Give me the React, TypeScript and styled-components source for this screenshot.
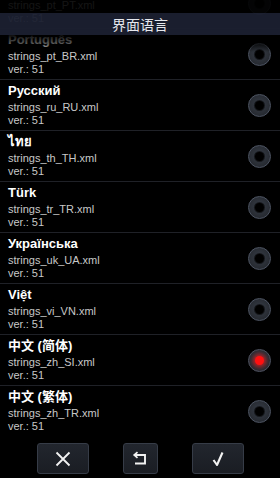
import React from "react"
import styled, { createGlobalStyle } from "styled-components"

interface Lang {
  name: string
  file: string
  version: number
  selected?: boolean
}

const langs: Lang[] = [
  { name: "Português (PT)", file: "strings_pt_PT.xml", version: 51 },
  { name: "Português", file: "strings_pt_BR.xml", version: 51 },
  { name: "Русский", file: "strings_ru_RU.xml", version: 51 },
  { name: "ไทย", file: "strings_th_TH.xml", version: 51 },
  { name: "Türk", file: "strings_tr_TR.xml", version: 51 },
  { name: "Українська", file: "strings_uk_UA.xml", version: 51 },
  { name: "Việt", file: "strings_vi_VN.xml", version: 51 },
  { name: "中文 (简体)", file: "strings_zh_SI.xml", version: 51, selected: true },
  { name: "中文 (繁体)", file: "strings_zh_TR.xml", version: 51 },
]

const GlobalStyle = createGlobalStyle`
  html, body {
    margin: 0;
    padding: 0;
    background: #000;
  }
  * {
    box-sizing: border-box;
  }
`

const Screen = styled.div`
  width: 280px;
  height: 478px;
  background: #000;
  display: flex;
  flex-direction: column;
  overflow: hidden;
  font-family: "Liberation Sans", "Noto Sans CJK SC", sans-serif;
`

const Viewport = styled.div`
  position: relative;
  flex: 1;
  overflow: hidden;
`

const List = styled.div`
  margin-top: -22px;
  display: flex;
  flex-direction: column;
`

const Row = styled.div`
  height: 51px;
  display: flex;
  align-items: center;
  justify-content: space-between;
  padding: 0 9px 0 8px;
  border-bottom: 1px solid #1f2127;
`

const Texts = styled.div`
  display: flex;
  flex-direction: column;
`

const Name = styled.div`
  font-size: 13px;
  font-weight: bold;
  line-height: 16px;
  color: #fff;
  margin-bottom: 2px;
  font-family: "Liberation Sans", "DejaVu Sans", "Noto Sans CJK SC", sans-serif;
`

const Sub = styled.div`
  font-size: 11px;
  line-height: 13px;
  color: #c8c8c8;
`

const Radio = styled.span<{ $on?: boolean }>`
  width: 23px;
  height: 23px;
  border-radius: 50%;
  background: radial-gradient(circle at 50% 45%, #363c46 0%, #282c33 65%, #1e2127 100%);
  border: 1px solid #4e5563;
  display: flex;
  align-items: center;
  justify-content: center;

  &::after {
    content: "";
    width: 9px;
    height: 9px;
    border-radius: 50%;
    background: ${(p) => (p.$on ? "#ff1010" : "#000")};
    box-shadow: ${(p) =>
      p.$on ? "0 0 4px 2px rgba(255, 20, 20, 0.7)" : "0 0 0 1px #15171b"};
  }
`

const TopDim = styled.div`
  position: absolute;
  top: 0;
  left: 0;
  right: 0;
  height: 13px;
  background: rgba(0, 0, 0, 0.9);
`

const TitleBar = styled.div`
  position: absolute;
  top: 13px;
  left: 0;
  right: 0;
  height: 22px;
  background: rgba(27, 31, 48, 0.96);
  color: #e6e8ee;
  font-family: "Noto Sans CJK SC", sans-serif;
  font-size: 14px;
  display: flex;
  align-items: center;
  justify-content: center;
`

const Fade = styled.div`
  position: absolute;
  top: 35px;
  left: 0;
  right: 0;
  height: 17px;
  background: linear-gradient(180deg, rgba(0, 0, 0, 0.95) 0%, rgba(0, 0, 0, 0.6) 60%, rgba(0, 0, 0, 0) 100%);
`

const BottomBar = styled.div`
  height: 42px;
  display: flex;
  justify-content: center;
  align-items: flex-start;
  gap: 34px;
  padding-top: 7px;
`

const Button = styled.button<{ $w: number }>`
  width: ${(p) => p.$w}px;
  height: 31px;
  border-radius: 3px;
  border: 1px solid #363c47;
  background: linear-gradient(180deg, #22262e 0%, #1a1d23 100%);
  display: flex;
  align-items: center;
  justify-content: center;
  padding: 0;
`

export default function App() {
  return (
    <>
      <GlobalStyle />
      <Screen>
        <Viewport>
          <List>
            {langs.map((l) => (
              <Row key={l.file}>
                <Texts>
                  <Name>{l.name}</Name>
                  <Sub>{l.file}</Sub>
                  <Sub>ver.: {l.version}</Sub>
                </Texts>
                <Radio $on={l.selected} />
              </Row>
            ))}
          </List>
          <TopDim />
          <TitleBar>界面语言</TitleBar>
          <Fade />
        </Viewport>
        <BottomBar>
          <Button $w={52}>
            <svg width="16" height="16" viewBox="0 0 16 16">
              <path d="M1.5 1.5 L14.5 14.5 M14.5 1.5 L1.5 14.5" stroke="#f2f2f2" strokeWidth="1.8" fill="none" />
            </svg>
          </Button>
          <Button $w={35}>
            <svg width="16" height="16" viewBox="0 0 16 16">
              <path d="M2.5 4 H13 V12.5 H3" stroke="#f2f2f2" strokeWidth="1.9" fill="none" />
              <path d="M5.5 1.2 L2.2 4 L5.5 6.8" stroke="#f2f2f2" strokeWidth="1.7" fill="none" />
            </svg>
          </Button>
          <Button $w={52}>
            <svg width="16" height="16" viewBox="0 0 16 16">
              <path d="M3.5 9 L7 14 L12.5 1.5" stroke="#f2f2f2" strokeWidth="2.1" fill="none" strokeLinejoin="round" />
            </svg>
          </Button>
        </BottomBar>
      </Screen>
    </>
  )
}
